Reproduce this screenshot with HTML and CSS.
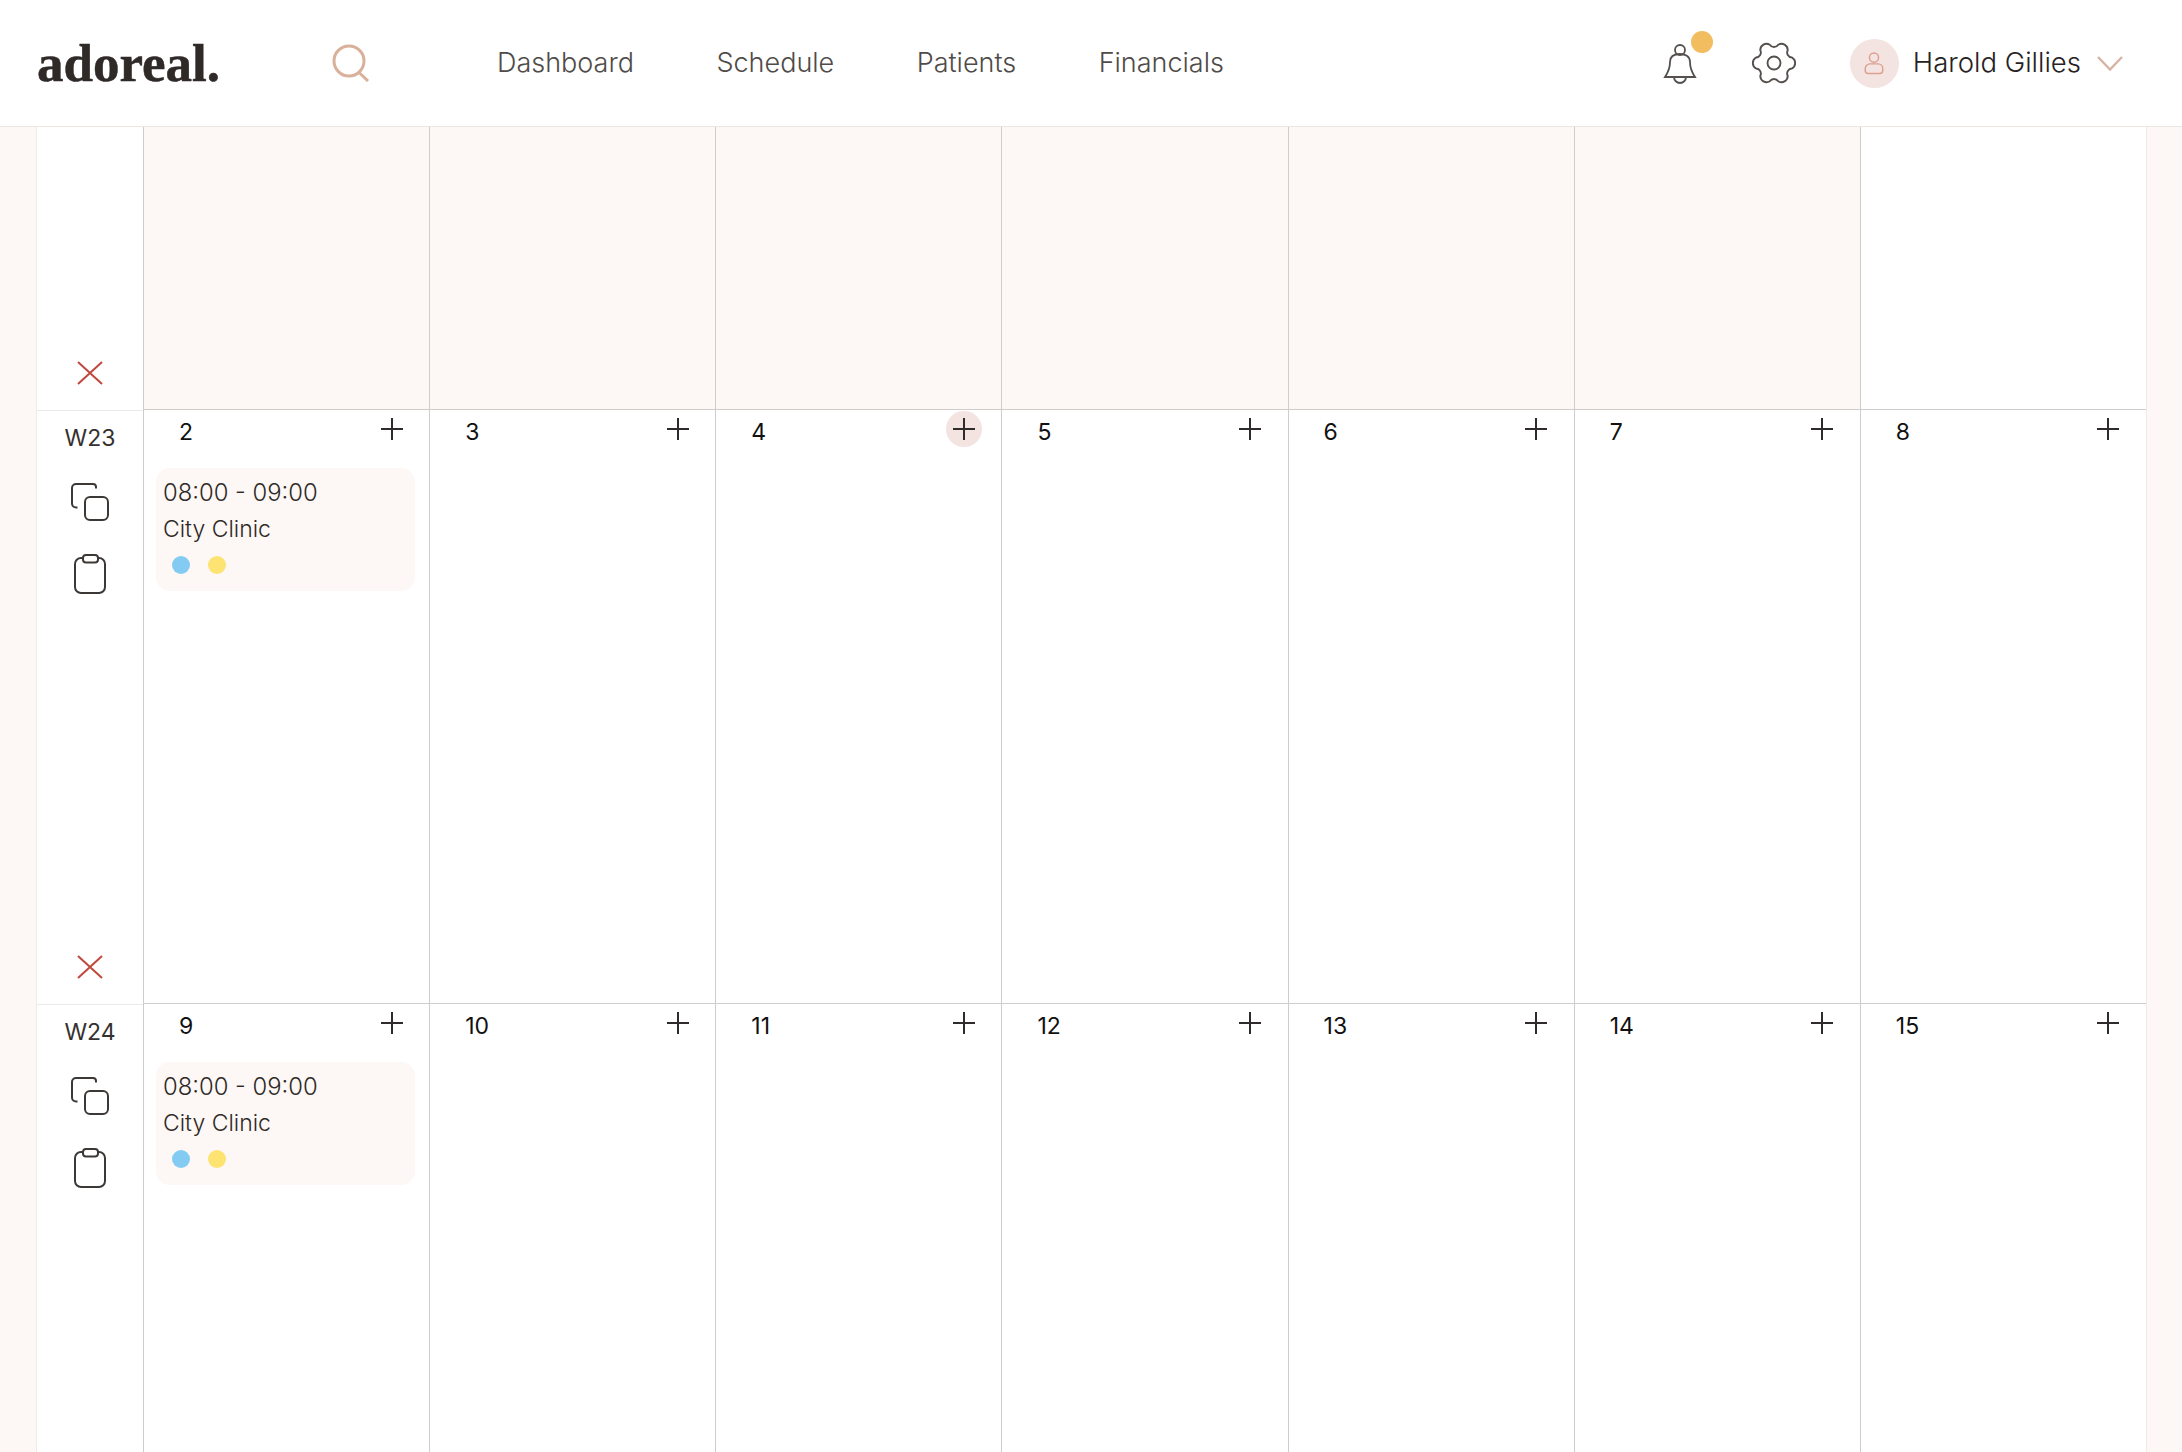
FILE: index.html
```html
<!DOCTYPE html>
<html lang="en">
<head>
<meta charset="utf-8">
<title>adoreal. Schedule</title>
<link rel="stylesheet" href="styles.css">
</head>
<body>
<svg class="sprite" aria-hidden="true">
  <symbol id="plus" viewBox="0 0 24 24"><path d="M12 1V23M1 12H23"/></symbol>
  <symbol id="cross" viewBox="0 0 26 24"><path d="M1 1L25 23M25 1L1 23"/></symbol>
  <symbol id="copy" viewBox="0 0 38 38"><path d="M25 5.500V4a3 3 0 0 0-3-3H5A4 4 0 0 0 1 5V20.500a4 4 0 0 0 4 4H6.500"/><rect x="14" y="14" width="23" height="23" rx="5"/></symbol>
  <symbol id="clip" viewBox="0 0 32 40"><rect x="1" y="4" width="30" height="35" rx="6"/><rect class="clip-top" x="9" y="1" width="15" height="7.500" rx="3"/></symbol>
</svg>
<header class="topbar">
  <div class="logo">adoreal.</div>
  <svg class="search" viewBox="0 0 38 38"><circle cx="17" cy="17" r="15"/><path d="M26.500 28L36 37"/></svg>
  <nav class="nav">
    <a>Dashboard</a>
    <a>Schedule</a>
    <a>Patients</a>
    <a>Financials</a>
  </nav>
  <div class="tools">
    <div class="bell-wrap">
      <svg class="bell" viewBox="0 0 34 40"><circle cx="17" cy="6" r="5"/><path d="M2 33C6 27 7 22 7 18C7 12 12 10 17 10C22 10 27 12 27 18C27 22 28 27 32 33Z"/><path d="M11 33a6 6 0 0 0 12 0"/></svg>
      <span class="badge"></span>
    </div>
    <svg class="gear" viewBox="0 0 40 40"><path d="M34.340 15.620A5 5 0 0 1 34.340 24.380A4 4 0 0 0 30.970 30.230A5 5 0 0 1 23.370 34.620A4 4 0 0 0 16.630 34.620A5 5 0 0 1 9.030 30.230A4 4 0 0 0 5.660 24.380A5 5 0 0 1 5.660 15.620A4 4 0 0 0 9.030 9.770A5 5 0 0 1 16.630 5.380A4 4 0 0 0 23.370 5.380A5 5 0 0 1 30.970 9.770A4 4 0 0 0 34.340 15.620Z"/><circle cx="20" cy="20" r="5.200"/></svg>
    <div class="user">
      <span class="avatar"><svg viewBox="0 0 24 28"><circle cx="12" cy="7.500" r="5.500"/><path d="M7 15H17a5.500 5.500 0 0 1 5.500 5.500V23a3.500 3.500 0 0 1-3.500 3.500H5A3.500 3.500 0 0 1 1.500 23V20.500A5.500 5.500 0 0 1 7 15Z"/></svg></span>
      <span class="user-name">Harold Gillies</span>
      <svg class="chevron" viewBox="0 0 26 15"><path d="M1 1L13 13.500L25 1"/></svg>
    </div>
  </div>
</header>
<main class="calendar">
  <div class="week">
    <svg class="icon-cross"><use href="#cross"/></svg>
  </div>
  <div class="day muted"></div>
  <div class="day muted"></div>
  <div class="day muted"></div>
  <div class="day muted"></div>
  <div class="day muted"></div>
  <div class="day muted"></div>
  <div class="day"></div>

  <div class="week">
    <div class="week-label">W23</div>
    <svg class="icon-copy"><use href="#copy"/></svg>
    <svg class="icon-clip"><use href="#clip"/></svg>
    <svg class="icon-cross"><use href="#cross"/></svg>
  </div>
  <div class="day line">
    <div class="day-head"><span class="num">2</span><button class="add"><svg><use href="#plus"/></svg></button></div>
    <div class="slot"><div class="slot-time">08:00 - 09:00</div><div>City Clinic</div><div class="dots"><i class="dot blue"></i><i class="dot yellow"></i></div></div>
  </div>
  <div class="day line"><div class="day-head"><span class="num">3</span><button class="add"><svg><use href="#plus"/></svg></button></div></div>
  <div class="day line"><div class="day-head"><span class="num">4</span><button class="add hover"><svg><use href="#plus"/></svg></button></div></div>
  <div class="day line"><div class="day-head"><span class="num">5</span><button class="add"><svg><use href="#plus"/></svg></button></div></div>
  <div class="day line"><div class="day-head"><span class="num">6</span><button class="add"><svg><use href="#plus"/></svg></button></div></div>
  <div class="day line"><div class="day-head"><span class="num">7</span><button class="add"><svg><use href="#plus"/></svg></button></div></div>
  <div class="day line"><div class="day-head"><span class="num">8</span><button class="add"><svg><use href="#plus"/></svg></button></div></div>

  <div class="week">
    <div class="week-label">W24</div>
    <svg class="icon-copy"><use href="#copy"/></svg>
    <svg class="icon-clip"><use href="#clip"/></svg>
  </div>
  <div class="day line">
    <div class="day-head"><span class="num">9</span><button class="add"><svg><use href="#plus"/></svg></button></div>
    <div class="slot"><div class="slot-time">08:00 - 09:00</div><div>City Clinic</div><div class="dots"><i class="dot blue"></i><i class="dot yellow"></i></div></div>
  </div>
  <div class="day line"><div class="day-head"><span class="num">10</span><button class="add"><svg><use href="#plus"/></svg></button></div></div>
  <div class="day line"><div class="day-head"><span class="num">11</span><button class="add"><svg><use href="#plus"/></svg></button></div></div>
  <div class="day line"><div class="day-head"><span class="num">12</span><button class="add"><svg><use href="#plus"/></svg></button></div></div>
  <div class="day line"><div class="day-head"><span class="num">13</span><button class="add"><svg><use href="#plus"/></svg></button></div></div>
  <div class="day line"><div class="day-head"><span class="num">14</span><button class="add"><svg><use href="#plus"/></svg></button></div></div>
  <div class="day line"><div class="day-head"><span class="num">15</span><button class="add"><svg><use href="#plus"/></svg></button></div></div>
</main>
</body>
</html>
```
FILE: styles.css
```css
* { box-sizing: border-box; }
html, body { margin: 0; height: 100%; }
body {
  height: 1452px;
  overflow: hidden;
  background: #fdf8f5;
  font-family: "Inter", "Liberation Sans", sans-serif;
  color: #35312f;
}
.sprite { display: none; }
svg { display: block; fill: none; }

.topbar {
  display: flex;
  align-items: center;
  height: 127px;
  padding-left: 37px;
  background: #fff;
  border-bottom: 1px solid #ece7e3;
}
.logo {
  width: 181px;
  margin-top: 1px;
  font-family: "Liberation Serif", serif;
  font-weight: 700;
  font-size: 53px;
  line-height: 1;
  color: #2f2a27;
  -webkit-text-stroke: 0.5px #2f2a27;
}
.search { width: 38px; height: 38px; margin-left: 114px; stroke: #d9b09a; stroke-width: 3; }
.nav {
  display: flex;
  gap: 82.500px;
  margin-left: 127px;
  margin-top: -2px;
  font-size: 27px;
  font-weight: 300;
  color: #4f4b48;
}
.tools { display: flex; align-items: center; margin-left: auto; padding-right: 59px; }
.bell-wrap { position: relative; width: 34px; height: 40px; margin-top: 1px; }
.bell { width: 34px; height: 40px; stroke: #55504d; stroke-width: 1.800; }
.badge {
  position: absolute;
  top: -13px;
  left: 28px;
  width: 22px;
  height: 22px;
  border-radius: 50%;
  background: #f2bd5e;
}
.gear { width: 50px; height: 50px; margin-left: 52px; stroke: #55504d; stroke-width: 1.500; }
.user { display: flex; align-items: center; margin-left: 51px; }
.avatar {
  display: flex;
  align-items: center;
  justify-content: center;
  width: 49px;
  height: 49px;
  border-radius: 50%;
  background: #f3e4e2;
}
.avatar svg { width: 20px; height: 24px; stroke: #dc9f90; stroke-width: 1.700; }
.user-name { margin-left: 14px; margin-top: -2px; font-size: 27.500px; font-weight: 300; color: #26221f; }
.chevron { width: 26px; height: 15px; margin-left: 16px; stroke: #d6b4a3; stroke-width: 2.400; }

.calendar {
  display: grid;
  grid-template-columns: 106px repeat(7, 1fr);
  grid-template-rows: 282px 594px 449px;
  width: 2109px;
  margin-left: 37px;
  box-shadow: 1px 0 0 #f0ebe6, -1px 0 0 #f0ebe6;
  background: #fff;
}
.week {
  display: flex;
  flex-direction: column;
  align-items: center;
  margin-top: 1px;
  padding-top: 9px;
  border-top: 1px solid #ece9e6;
}
.week:first-child { margin-top: 0; border-top: 0; padding-top: 0; }
.week-label { font-size: 23px; line-height: 36px; color: #35312f; }
.icon-copy { width: 38px; height: 38px; margin-top: 27px; stroke: #3c3836; stroke-width: 2; }
.icon-clip { width: 32px; height: 40px; margin-top: 33px; stroke: #3c3836; stroke-width: 2; }
.clip-top { fill: #fff; }
.icon-cross { width: 26px; height: 24px; margin-top: auto; margin-bottom: 24px; stroke: #c0473c; stroke-width: 2; }

.day { border-left: 1px solid #cfcdcb; min-width: 0; }
.day.muted { background: #fdf8f5; }
.day.line { border-top: 1px solid #cfcdcb; }
.day-head {
  display: flex;
  align-items: flex-start;
  justify-content: space-between;
  padding: 1px 19.500px 0 35px;
}
.num { font-size: 23px; line-height: 36px; padding-top: 3px; color: #111; }
.add {
  display: flex;
  align-items: center;
  justify-content: center;
  width: 36px;
  height: 36px;
  padding: 0;
  border: 0;
  border-radius: 50%;
  background: none;
}
.add.hover { background: #f3e3e1; }
.add svg { width: 24px; height: 24px; stroke: #2f2b2a; stroke-width: 2; }
.slot {
  margin: 18px 14px 0 12px;
  height: 123px;
  padding: 7px 7px;
  border-radius: 14px;
  background: #fdf8f5;
  font-size: 23px;
  font-weight: 300;
  line-height: 36px;
  color: #2e2a27;
}
.slot-time { font-size: 23.800px; }
.dots { display: flex; gap: 18px; padding: 9px 0 0 9px; }
.dot { width: 18px; height: 18px; border-radius: 50%; }
.dot.blue { background: #84cbf3; }
.dot.yellow { background: #fde371; }
```
